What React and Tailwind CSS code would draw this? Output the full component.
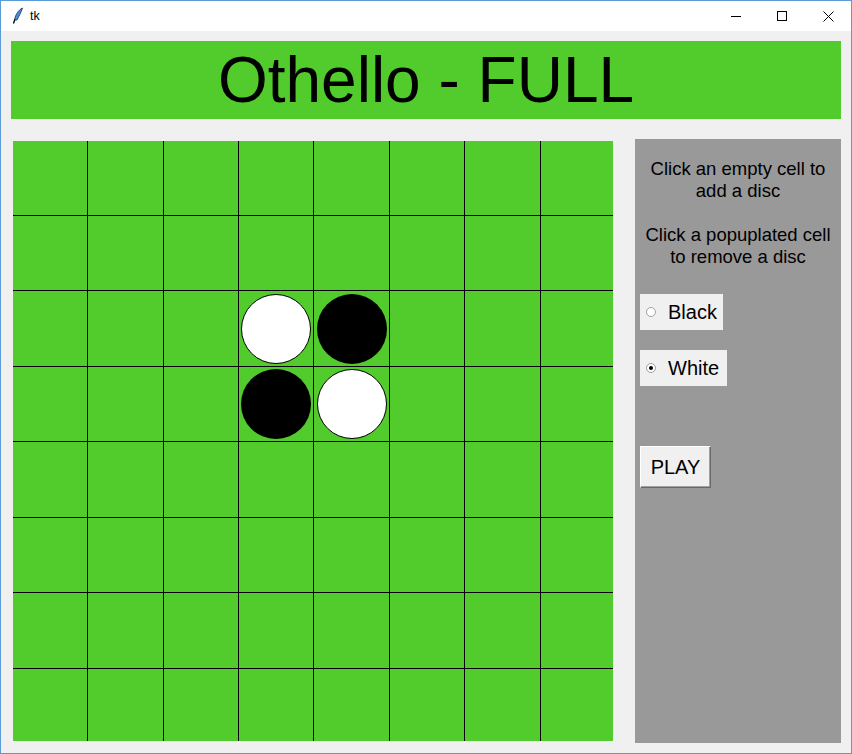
import React from 'react';

// board layout mirrors the tk canvas: uneven pixel cells, 1px black lines
const discs = {
  '2-3': 'white',
  '2-4': 'black',
  '3-3': 'black',
  '3-4': 'white',
};

function Disc({ color }) {
  if (color === 'white') {
    return <div className="w-[70px] h-[70px] rounded-full bg-white border border-black" />;
  }
  return <div className="w-[70px] h-[70px] rounded-full bg-black" />;
}

function TitleBar() {
  return (
    <div className="h-[30px] bg-white flex items-center shrink-0">
      {/* feather icon */}
      <svg width="16" height="18" viewBox="0 0 16 18" className="ml-[9px]">
        <path d="M12.5 1 C8.5 3 5.5 7.5 4.5 13 L7 13 C9 9 11 5.5 12.5 1 Z" fill="#4a8fd8" stroke="#1c3c6c" strokeWidth="0.9" />
        <path d="M4.8 12.5 L3.5 16.5" stroke="#000" strokeWidth="1.3" />
      </svg>
      <span className="ml-[4px] text-[12.5px] text-black" style={{ fontFamily: '"Liberation Sans", Arial, sans-serif' }}>tk</span>
      <div className="ml-auto flex items-center h-full">
        <div className="w-[46px] h-full flex items-center justify-center">
          <svg width="10" height="10" viewBox="0 0 10 10"><path d="M0 5.5 H10" stroke="#000" strokeWidth="1" /></svg>
        </div>
        <div className="w-[46px] h-full flex items-center justify-center">
          <svg width="10" height="10" viewBox="0 0 10 10"><rect x="0.5" y="0.5" width="9" height="9" fill="none" stroke="#000" strokeWidth="1" /></svg>
        </div>
        <div className="w-[46px] h-full flex items-center justify-center">
          <svg width="11" height="11" viewBox="0 0 11 11"><path d="M0.5 0.5 L10.5 10.5 M10.5 0.5 L0.5 10.5" stroke="#000" strokeWidth="1" /></svg>
        </div>
      </div>
    </div>
  );
}

function RadioOption({ label, checked, widthClass }) {
  return (
    <div className={`h-[36px] ${widthClass} bg-[#f0f0f0] flex items-center pl-[6px]`}>
      <div className="w-[10px] h-[10px] rounded-full border border-[#a0a0a0] bg-white flex items-center justify-center">
        {checked && <div className="w-[4px] h-[4px] rounded-full bg-black" />}
      </div>
      <span className="ml-[12px] text-[20px] text-black">{label}</span>
    </div>
  );
}

export default function App() {
  const rows = [0, 1, 2, 3, 4, 5, 6, 7];

  return (
    <div
      className="w-[852px] h-[754px] border border-[#5b9bd5] bg-[#f0f0f0] flex flex-col overflow-hidden"
      style={{ fontFamily: '"Liberation Sans", Arial, sans-serif' }}
    >
      <TitleBar />

      <div className="px-[10px] pt-[10px]">
        {/* Header */}
        <div className="h-[78px] bg-[#52cc2c] flex items-center justify-center">
          <h1 className="text-[64px] leading-none text-black">Othello - FULL</h1>
        </div>

        <div className="mt-[20px] flex">
          {/* Board */}
          <div className="ml-[2px] mt-[2px] w-[600px] h-[600px] bg-black grid gap-px grid-cols-[74px_75px_74px_74px_75px_74px_75px_72px] grid-rows-[74px_74px_75px_74px_75px_74px_75px_72px]">
            {rows.map((r) =>
              rows.map((c) => (
                <div key={`${r}-${c}`} className="bg-[#52cc2c] flex items-center justify-center">
                  {discs[`${r}-${c}`] && <Disc color={discs[`${r}-${c}`]} />}
                </div>
              ))
            )}
          </div>

          {/* Side panel */}
          <div className="ml-[22px] w-[206px] h-[604px] bg-[#999999] flex flex-col pt-[19px]">
            <p className="text-center text-[18.5px] leading-[22px] text-black">
              Click an empty cell to
              <br />
              add a disc
            </p>
            <p className="mt-[22px] text-center text-[18.5px] leading-[22px] text-black">
              Click a popuplated cell
              <br />
              to remove a disc
            </p>

            <div className="mt-[26px] ml-[5px] flex flex-col gap-[20px]">
              <RadioOption label="Black" checked={false} widthClass="w-[83px]" />
              <RadioOption label="White" checked={true} widthClass="w-[87px]" />
            </div>

            <button className="mt-[60px] ml-[5px] w-[71px] h-[42px] bg-[#f0f0f0] text-[20px] text-black border border-t-white border-l-white border-b-[#696969] border-r-[#696969] shadow-[inset_-1px_-1px_0_#a0a0a0]">
              PLAY
            </button>
          </div>
        </div>
      </div>
    </div>
  );
}
